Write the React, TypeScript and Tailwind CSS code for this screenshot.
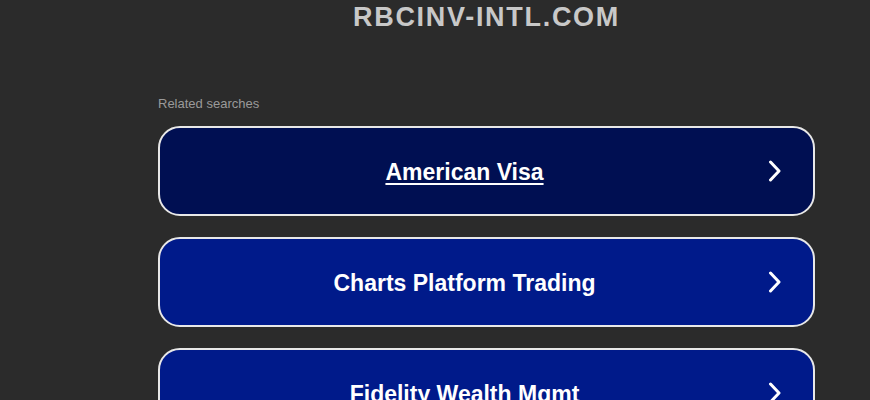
const searches = [
  { label: 'American Visa', bg: 'bg-[#000f52]', underline: true },
  { label: 'Charts Platform Trading', bg: 'bg-[#001a8a]', underline: false },
  { label: 'Fidelity Wealth Mgmt', bg: 'bg-[#001a8a]', underline: false },
]

function Chevron() {
  return (
    <svg className="absolute right-[31px] top-1/2 -translate-y-1/2" width="14" height="22" viewBox="0 0 14 22" fill="none">
      <path d="M2.5 2 L11 11 L2.5 20" stroke="white" strokeWidth="3" strokeLinecap="round" strokeLinejoin="round" />
    </svg>
  )
}

export default function App() {
  return (
    <div className="min-h-[400px] bg-[#2b2b2b] font-['Liberation_Sans',Arial,sans-serif] overflow-hidden">
      <div className="ml-[158px] w-[657px]">
        <h1 className="pt-[2px] text-center text-[27px] font-bold leading-[30px] tracking-[1.7px] text-[#c8c8c8]">
          RBCINV-INTL.COM
        </h1>
        <div className="mt-[64px] text-[13px] leading-4 text-[#9a9a9a]">Related searches</div>
        <div className="mt-[14px] flex flex-col gap-[21px]">
          {searches.map((s) => (
            <a
              key={s.label}
              href="#"
              className={`relative flex h-[90px] items-center justify-center rounded-[22px] border-2 border-[#e8e8e8] pr-[44px] pt-[2px] ${s.bg} text-[23px] font-bold text-white ${s.underline ? 'underline underline-offset-[3px]' : 'no-underline'}`}
            >
              <span>{s.label}</span>
              <Chevron />
            </a>
          ))}
        </div>
      </div>
    </div>
  )
}
